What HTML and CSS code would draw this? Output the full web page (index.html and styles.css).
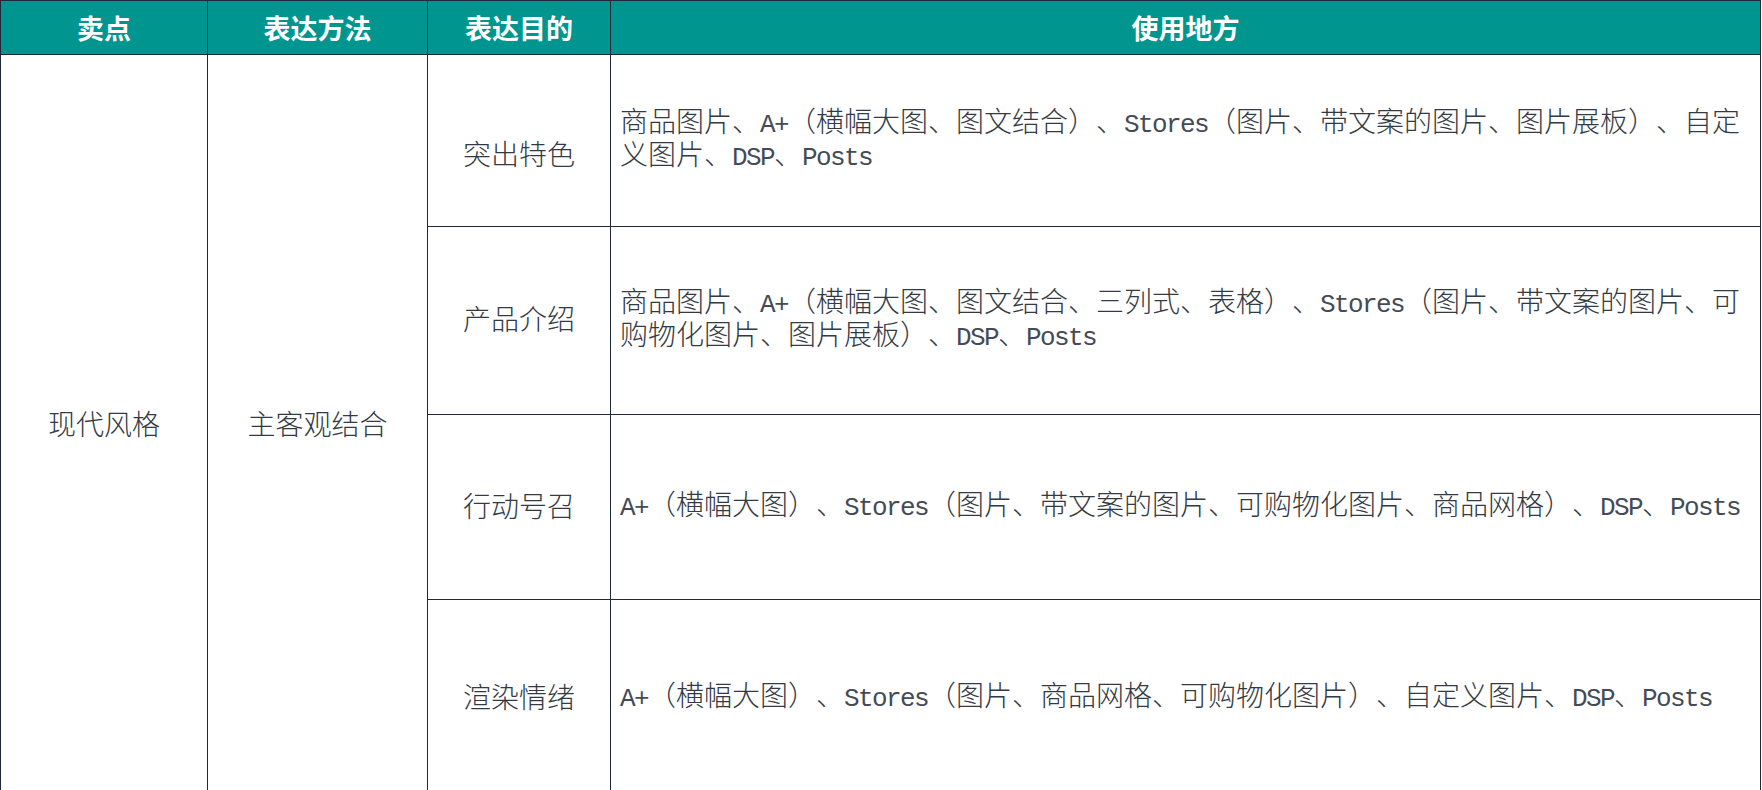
FILE: index.html
```html
<!DOCTYPE html>
<html lang="zh-CN">
<head>
<meta charset="utf-8">
<title>卖点表达</title>
<link rel="stylesheet" href="styles.css">
</head>
<body>
<table class="grid">
  <colgroup>
    <col class="c1">
    <col class="c2">
    <col class="c3">
    <col class="c4">
  </colgroup>
  <thead>
    <tr class="head">
      <th>卖点</th>
      <th>表达方法</th>
      <th>表达目的</th>
      <th>使用地方</th>
    </tr>
  </thead>
  <tbody>
    <tr class="r1">
      <td rowspan="4">现代风格</td>
      <td rowspan="4">主客观结合</td>
      <td class="lowered">突出特色</td>
      <td class="uses">商品图片、<span class="en">A+</span>（横幅大图、图文结合）、<span class="en">Stores</span>（图片、带文案的图片、图片展板）、自定义图片、<span class="en">DSP</span>、<span class="en">Posts</span></td>
    </tr>
    <tr class="r2">
      <td>产品介绍</td>
      <td class="uses">商品图片、<span class="en">A+</span>（横幅大图、图文结合、三列式、表格）、<span class="en">Stores</span>（图片、带文案的图片、可购物化图片、图片展板）、<span class="en">DSP</span>、<span class="en">Posts</span></td>
    </tr>
    <tr class="r3">
      <td>行动号召</td>
      <td class="uses"><span class="en">A+</span>（横幅大图）、<span class="en">Stores</span>（图片、带文案的图片、可购物化图片、商品网格）、<span class="en">DSP</span>、<span class="en">Posts</span></td>
    </tr>
    <tr class="r4">
      <td>渲染情绪</td>
      <td class="uses"><span class="en">A+</span>（横幅大图）、<span class="en">Stores</span>（图片、商品网格、可购物化图片）、自定义图片、<span class="en">DSP</span>、<span class="en">Posts</span></td>
    </tr>
  </tbody>
</table>
</body>
</html>
```
FILE: styles.css
```css
html, body {
  margin: 0;
  padding: 0;
  background: #ffffff;
}

.grid {
  border-collapse: collapse;
  table-layout: fixed;
  width: 1760px;
}

.c1 { width: 207px; }
.c2 { width: 220px; }
.c3 { width: 183px; }
.c4 { width: 1150px; }

.grid th {
  background: #00968f;
  color: #ffffff;
  font-family: "Noto Sans CJK SC", "Noto Sans", sans-serif;
  font-weight: 700;
  font-size: 27px;
  line-height: 32px;
  text-align: center;
  vertical-align: middle;
  border: 1px solid #1e2a38;
  padding: 0;
}

.head { height: 54px; }
.r1 { height: 172px; }
.r2 { height: 188px; }
.r3 { height: 185px; }
.r4 { height: 197px; }

.grid td {
  border: 1px solid #1e2a38;
  color: #333a44;
  font-family: "Noto Sans CJK SC", sans-serif;
  font-weight: 300;
  font-size: 28px;
  line-height: 33px;
  text-align: center;
  vertical-align: middle;
  padding: 0 0 4px;
  text-spacing-trim: space-all;
}

.grid td.lowered {
  padding-top: 30px;
}

.grid td.uses {
  text-align: left;
  padding: 0 8px 8px 9px;
}

.en {
  font-family: "Liberation Mono", monospace;
  font-weight: 400;
  font-size: 26px;
  line-height: 20px;
  letter-spacing: -1.6px;
  color: #444b56;
}
```
